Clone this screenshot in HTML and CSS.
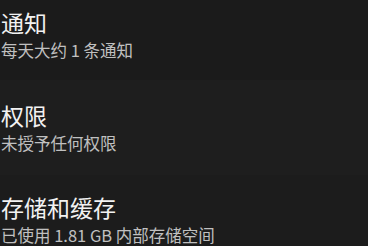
FILE: index.html
```html
<!DOCTYPE html>
<html lang="zh-CN">
<head>
<meta charset="utf-8">
<link rel="stylesheet" href="styles.css">
</head>
<body>
<div class="list">
  <div class="item">
    <div class="title">通知</div>
    <div class="summary">每天大约 1 条通知</div>
  </div>
  <div class="item">
    <div class="title">权限</div>
    <div class="summary">未授予任何权限</div>
  </div>
  <div class="item">
    <div class="title">存储和缓存</div>
    <div class="summary">已使用 1.81 GB 内部存储空间</div>
  </div>
</div>
</body>
</html>
```
FILE: styles.css
```css
html, body {
  margin: 0;
  padding: 0;
}
body {
  font-family: "Noto Sans CJK SC", "Noto Sans", sans-serif;
  width: 368px;
  height: 246px;
  overflow: hidden;
  background: linear-gradient(to bottom, #1b1b1b 0, #1b1b1b 80px, #1e1e1e 80px, #1e1e1e 175px, #1c1c1c 175px);
}
.list {
  display: flex;
  flex-direction: column;
}
.item {
  height: 92.5px;
  flex: none;
  box-sizing: border-box;
  padding: 8px 0 0 1px;
  display: flex;
  flex-direction: column;
}
.item:last-child {
  height: auto;
}
.title {
  font-size: 23px;
  line-height: 28px;
  color: #f2f2f2;
}
.summary {
  margin-top: 4px;
  font-size: 16.5px;
  line-height: 20px;
  color: #c0c0c0;
}
```
